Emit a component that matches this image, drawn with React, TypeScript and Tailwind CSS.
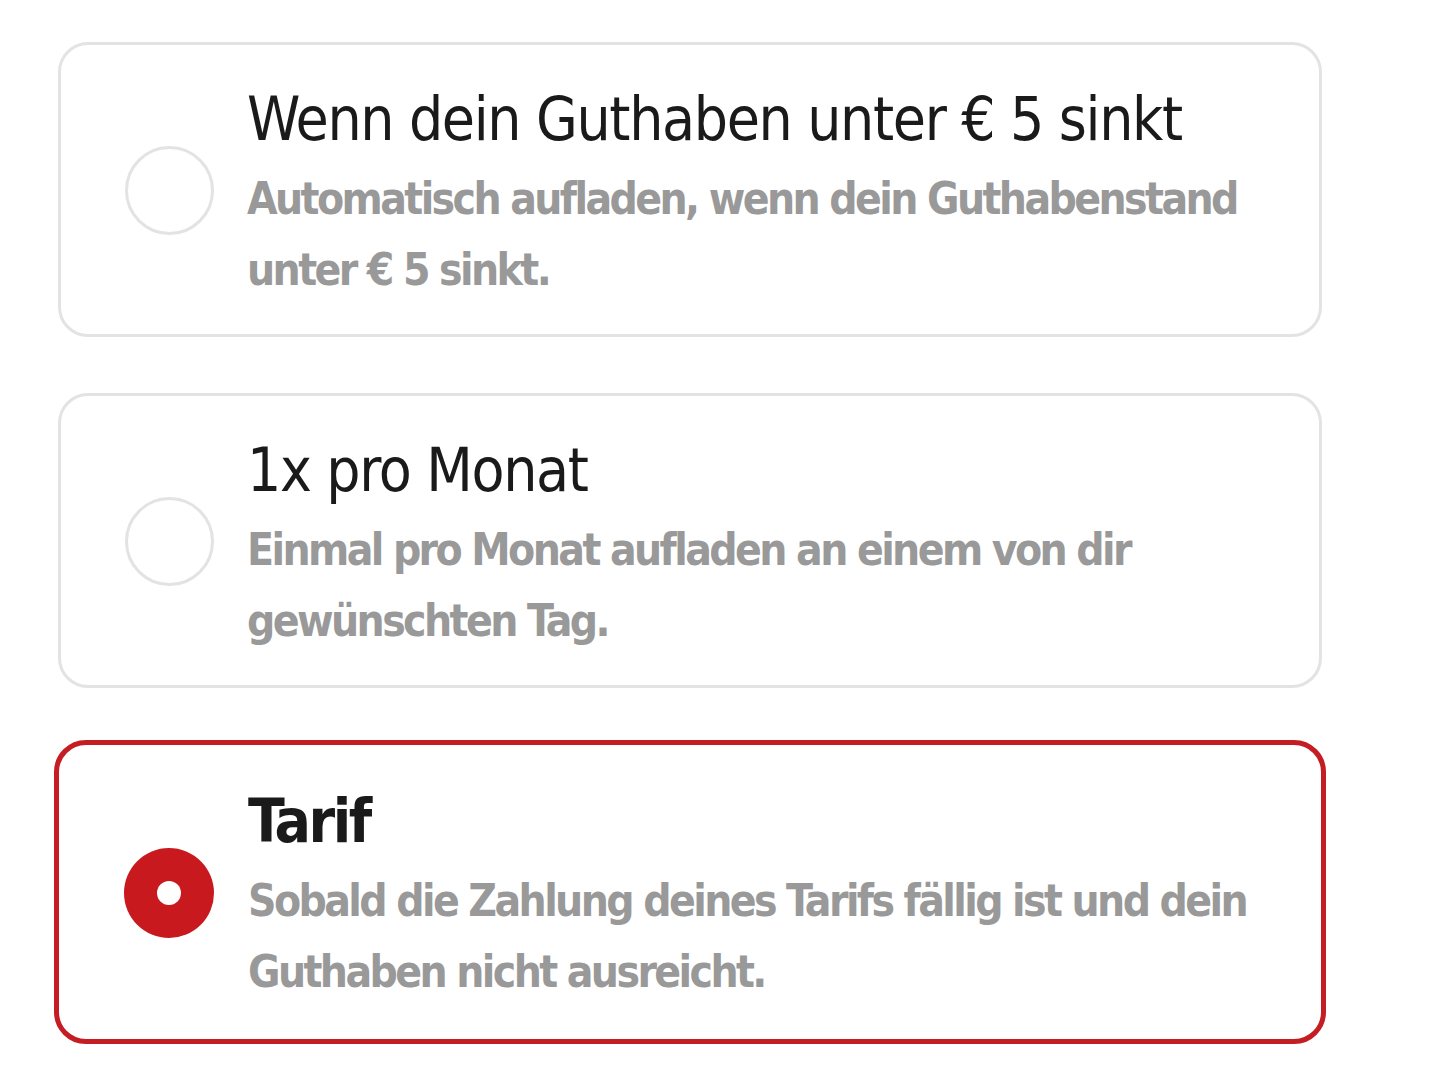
import React, { useState } from "react";

type Option = { id: string; title: string; lines: string[] };

const OPTIONS: Option[] = [
  {
    id: "low",
    title: "Wenn dein Guthaben unter € 5 sinkt",
    lines: ["Automatisch aufladen, wenn dein Guthabenstand", "unter € 5 sinkt."],
  },
  {
    id: "monthly",
    title: "1x pro Monat",
    lines: ["Einmal pro Monat aufladen an einem von dir", "gewünschten Tag."],
  },
  {
    id: "tarif",
    title: "Tarif",
    lines: ["Sobald die Zahlung deines Tarifs fällig ist und dein", "Guthaben nicht ausreicht."],
  },
];

export default function App() {
  const [selected, setSelected] = useState("tarif");

  return (
    <div
      className="min-h-screen bg-white pt-[42px] pl-[58px] w-[1440px]"
      style={{ fontFamily: '"DejaVu Sans Condensed", "DejaVu Sans", sans-serif' }}
    >
      <div className="flex flex-col gap-[56px] w-[1264px]">
        {OPTIONS.map((opt) => {
          const active = opt.id === selected;
          return (
            <button
              key={opt.id}
              onClick={() => setSelected(opt.id)}
              className={
                active
                  ? "flex items-center text-left rounded-[32px] border-[5px] border-[#c41d23] bg-white -mx-[4px] -my-[4px] pl-[65px] pr-8 pt-[40px] pb-[32px]"
                  : "flex items-center text-left rounded-[30px] border-[3px] border-[#e3e3e3] bg-white pl-[64px] pr-8 pt-[38px] pb-[29px]"
              }
            >
              {active ? (
                <span className="w-[90px] h-[90px] mb-[6px] shrink-0 rounded-full bg-[#c8191f] flex items-center justify-center">
                  <span className="w-[24px] h-[24px] rounded-full bg-white" />
                </span>
              ) : (
                <span className="w-[89px] h-[89px] mb-[8px] shrink-0 rounded-full border-[3px] border-[#e3e3e3] bg-white" />
              )}
              <div className={active ? "ml-[34px] flex flex-col" : "ml-[33px] flex flex-col"}>
                <div
                  className={
                    active
                      ? "text-[60px] leading-[72px] font-bold tracking-[-2.5px] text-[#1a1a1a]"
                      : "text-[60px] leading-[72px] font-normal tracking-[-1.35px] text-[#1a1a1a]"
                  }
                >
                  {opt.title}
                </div>
                <div className="mt-[8px] text-[44px] leading-[71px] font-bold tracking-[-2.6px] text-[#999999]">
                  {opt.lines.map((l) => (
                    <div key={l} className="whitespace-nowrap">
                      {l}
                    </div>
                  ))}
                </div>
              </div>
            </button>
          );
        })}
      </div>
    </div>
  );
}
